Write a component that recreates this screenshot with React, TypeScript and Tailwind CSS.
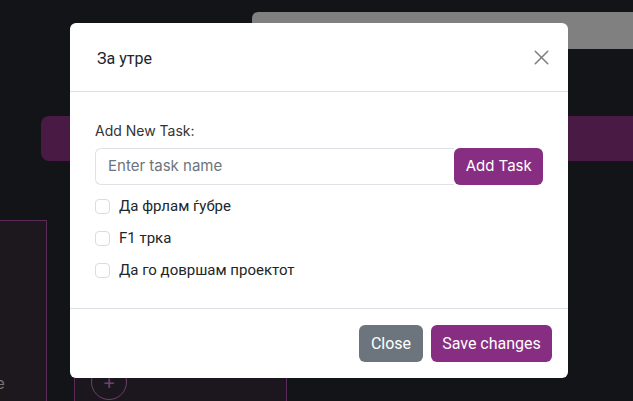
import { X } from 'lucide-react'

const tasks = ['Да фрлам ѓубре', 'F1 трка', 'Да го довршам проектот']

export default function App() {
  return (
    <div className="relative h-[401px] w-[633px] overflow-hidden bg-[#121417] font-['Inter',sans-serif]">
      {/* page behind the modal */}
      <div className="flex flex-col pt-3">
        <div className="ml-[252px] h-[37px] rounded-tl-md bg-[#808080]" />
        <div className="ml-[41px] mt-[67px] h-[45px] rounded-l-lg bg-[#481a44]" />
        <div className="mt-[59px] flex items-start">
          <div className="h-[200px] w-[47px] border border-l-0 border-[#5a2a58] bg-[#1d171e]">
            <div className="mt-[155px] text-[15px] leading-none text-[#777] -ml-1">e</div>
          </div>
          <div className="ml-[27px] mt-[150px] h-[60px] w-[213px] border-x border-[#5a2a58] bg-[#1c171e] pl-4">
            <div className="-mt-[6px] flex h-[36px] w-[36px] items-center justify-center rounded-full border border-[#6a4368] text-[#6a4368]">
              <span className="text-xl leading-none">+</span>
            </div>
          </div>
        </div>
      </div>

      {/* modal */}
      <div className="absolute left-[70px] top-[23px] w-[498px] rounded-md bg-white">
        <div className="flex h-[69px] items-center justify-between border-b border-[#dee2e6] pl-[27px] pr-[14px]">
          <h5 className="mt-[3px] font-['Roboto',sans-serif] text-[16px] text-[#212529]">За утре</h5>
          <X className="h-[25px] w-[25px] text-[#808080]" strokeWidth={1.5} />
        </div>

        <div className="border-b border-[#dee2e6] px-[25px] pb-[29px] pt-[29px]">
          <label className="block text-[14px] leading-[20px] text-[#333]">Add New Task:</label>
          <div className="mt-[7px] flex h-[37px]">
            <input
              className="w-[361px] rounded-l-md border border-r-0 border-[#dee2e6] px-3 text-[15px] text-[#333] placeholder:text-[#6c757d] outline-none"
              placeholder="Enter task name"
            />
            <button className="w-[89px] rounded-md bg-[#872e82] text-[15px] text-white">Add Task</button>
          </div>
          <div className="mt-[12px] flex flex-col gap-[14px] font-['Roboto',sans-serif]">
            {tasks.map((t) => (
              <label key={t} className="flex h-[18px] items-center gap-[9px] text-[15px] text-[#212529]">
                <span className="h-[15px] w-[15px] rounded-[4px] border border-[#dcdcdc] bg-white" />
                {t}
              </label>
            ))}
          </div>
        </div>

        <div className="flex h-[69px] items-center justify-end gap-2 pr-[16px] font-['Roboto',sans-serif]">
          <button className="h-[37px] w-[64px] rounded-md bg-[#6c757d] text-[16px] text-white">Close</button>
          <button className="h-[37px] w-[121px] rounded-md bg-[#872e82] text-[16px] text-white">Save changes</button>
        </div>
      </div>
    </div>
  )
}
